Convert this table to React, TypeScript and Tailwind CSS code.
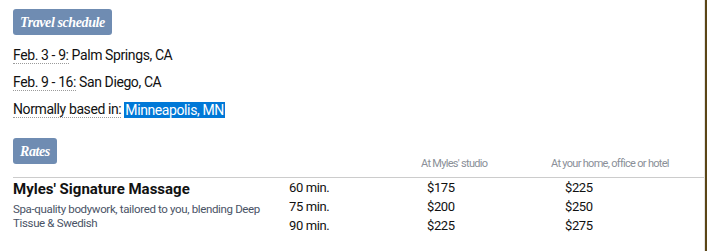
import React from "react";

const Badge = ({ children }: { children: React.ReactNode }) => (
  <div
    className="inline-flex items-center h-[26px] px-[7px] rounded-[3px] bg-[#6f8cb2] text-white italic font-bold text-[14px] tracking-[-0.4px]"
    style={{ fontFamily: '"Liberation Serif", serif' }}
  >
    {children}
  </div>
);

const Abbr = ({ children }: { children: React.ReactNode }) => (
  <span className="border-b border-dotted border-[#9a9a9a] leading-[15px] inline-block">{children}</span>
);

export default function App() {
  const rows = [
    ["60 min.", "$175", "$225"],
    ["75 min.", "$200", "$250"],
    ["90 min.", "$225", "$275"],
  ];
  return (
    <div
      className="w-[708px] h-[251px] flex bg-white overflow-hidden text-[#111]"
      style={{ fontFamily: 'Roboto, "Liberation Sans", sans-serif' }}
    >
      <div className="flex-1 pl-[13px] pt-[9px]">
        <Badge>Travel schedule</Badge>
        <div className="mt-[7px] text-[14px] tracking-[-0.4px]">
          <div className="h-[27px] flex items-center">
            <Abbr>Feb. 3 - 9:</Abbr>
            <span className="ml-[3px]">Palm Springs, CA</span>
          </div>
          <div className="h-[27px] flex items-center">
            <Abbr>Feb. 9 - 16:</Abbr>
            <span className="ml-[3px]">San Diego, CA</span>
          </div>
          <div className="h-[27px] flex items-center">
            <Abbr>Normally based in:</Abbr>
            <span className="ml-[3px] bg-[#0078d7] text-white px-[1px] leading-[16px]">Minneapolis, MN</span>
          </div>
        </div>
        <div className="mt-[15px] flex h-[39px]">
          <div className="w-[408px]">
            <Badge>Rates</Badge>
          </div>
          <div className="w-[130px] flex items-end pb-[5px] text-[11px] text-[#8a8f98] tracking-[-0.7px]">
            At Myles' studio
          </div>
          <div className="flex-1 flex items-end pb-[5px] text-[11px] text-[#8a8f98] tracking-[-0.7px]">
            At your home, office or hotel
          </div>
        </div>
        <div className="border-t border-[#cccccc] flex">
          <div className="w-[276px] pt-[1px]">
            <div className="text-[15px] leading-[20px] font-bold tracking-[0px]">Myles' Signature Massage</div>
            <div className="mt-[3px] text-[11.5px] leading-[14px] text-[#4a5366] tracking-[-0.35px] w-[262px]">
              Spa-quality bodywork, tailored to you, blending Deep Tissue &amp; Swedish
            </div>
          </div>
          <div className="flex-1 text-[13px] tracking-[-0.4px]">
            {rows.map((r) => (
              <div key={r[0]} className="flex h-[19px] items-center">
                <div className="w-[138px]">{r[0]}</div>
                <div className="w-[138px]">{r[1]}</div>
                <div>{r[2]}</div>
              </div>
            ))}
          </div>
        </div>
      </div>
      <div className="w-[1px] bg-[#e4e4e4]" />
      <div className="w-[2px] bg-[#5b4616]" />
      <div className="w-[1px] bg-white" />
    </div>
  );
}
